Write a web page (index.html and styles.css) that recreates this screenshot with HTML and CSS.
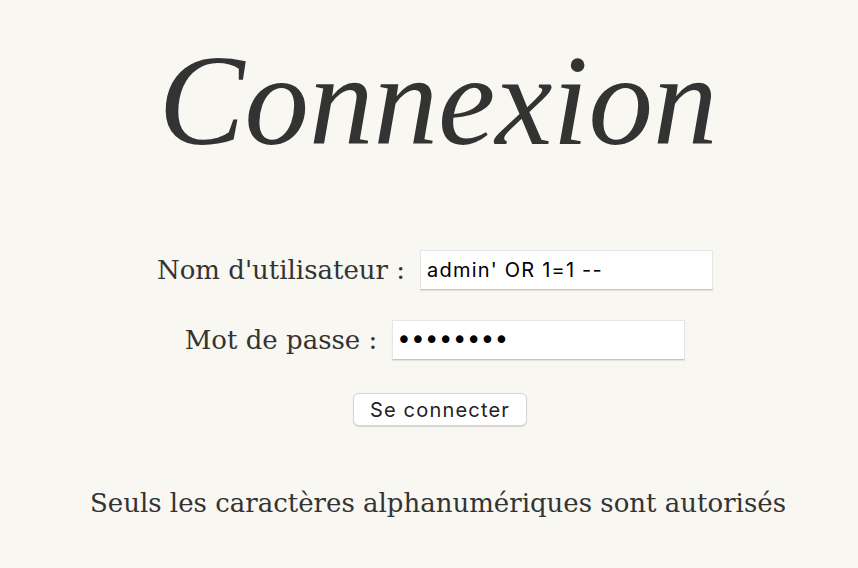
FILE: index.html
```html
<!DOCTYPE html>
<html lang="fr">
<head>
<meta charset="utf-8">
<title>Connexion</title>
<link rel="stylesheet" href="styles.css">
</head>
<body>
<main class="page">
  <h1 class="title">Connexion</h1>
  <form class="login">
    <div class="row">
      <label class="label" for="user">Nom d'utilisateur :</label>
      <input class="field" id="user" type="text" value="admin' OR 1=1 --">
    </div>
    <div class="row">
      <label class="label" for="pass">Mot de passe :</label>
      <input class="field field-pass" id="pass" type="password" value="password">
    </div>
    <div class="row">
      <button class="btn" type="button">Se connecter</button>
    </div>
  </form>
  <p class="note">Seuls les caractères alphanumériques sont autorisés</p>
</main>
</body>
</html>
```
FILE: styles.css
```css
html, body {
  margin: 0;
  padding: 0;
  background: #f8f7f2;
}
body {
  font-family: "DejaVu Serif", serif;
  color: #333;
  width: 858px;
  height: 568px;
  overflow: hidden;
}
.page {
  display: flex;
  flex-direction: column;
  align-items: center;
  padding-left: 18px;
}
.title {
  margin: 26px 0 0;
  font-family: "Liberation Serif", serif;
  font-size: 129px;
  font-style: italic;
  font-weight: normal;
  line-height: 150px;
}
.login {
  margin-top: 74px;
  display: flex;
  flex-direction: column;
  align-items: center;
  gap: 30px;
  padding-right: 6px;
}
.row {
  display: flex;
  align-items: center;
  gap: 15px;
}
.label {
  font-size: 26px;
}
.field {
  box-sizing: border-box;
  width: 293px;
  height: 40px;
  border: 1px solid #e6e6e6;
  border-bottom-color: #c4c4c4;
  background: #fff;
  font-family: "Inter", sans-serif;
  font-size: 20px;
  letter-spacing: 1.2px;
  color: #000;
  padding: 0 6px;
  box-shadow: 0 1px 1px rgba(0,0,0,0.08);
}
.field-pass {
  font-family: "DejaVu Sans", sans-serif;
  font-size: 26px;
  letter-spacing: -1.4px;
  padding-left: 3px;
}
.btn {
  font-family: "Inter", sans-serif;
  font-size: 20px;
  letter-spacing: 1.2px;
  color: #222;
  background: #fff;
  border: 1px solid #d6d6d6;
  border-radius: 6px;
  height: 33px;
  padding: 0 16px;
  margin: 3px 0 0 10px;
  box-shadow: 0 1px 1px rgba(0,0,0,0.15);
}
.note {
  margin: 62px 0 0;
  font-size: 26px;
}
```
